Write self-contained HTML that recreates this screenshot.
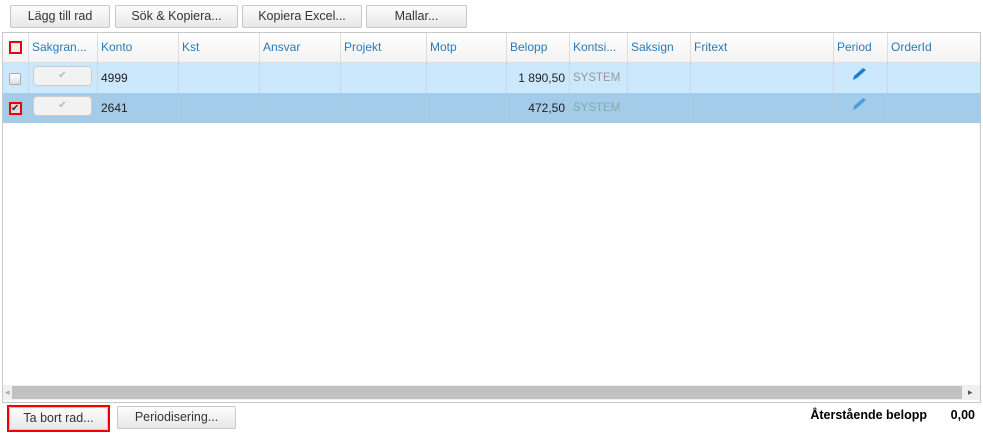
<!DOCTYPE html><html><head><style>
body{margin:0;width:983px;height:438px;background:#fff;font-family:"Liberation Sans",sans-serif;font-size:13px;position:relative;overflow:hidden}
.a{position:absolute}
.btn{position:absolute;box-sizing:border-box;border:1px solid #c8c8c8;border-radius:2px;background:linear-gradient(#fcfcfc,#e8e8e8);color:#333;font-size:12.5px;text-align:center;line-height:21px;height:23px;top:5px}
.h{position:absolute;top:33px;height:30px;line-height:29px;color:#2a7ab8;font-size:12px;padding-left:3px;box-sizing:border-box;border-left:1px solid #ddd;white-space:nowrap;overflow:hidden}
.v{position:absolute;width:0;border-left:1px dotted #c8c8c8;top:63px;height:60px}
.c{position:absolute;font-size:12px;line-height:30px;color:#222}
.cb{position:absolute;width:10px;height:10px;border:1px solid #aaa;border-radius:2px;background:linear-gradient(#fff,#ddd)}
.tg{position:absolute;left:33px;width:57px;height:18px;border:1px solid #ccc;border-radius:4px;background:#f2f2f2;color:#bbb;font-size:10px;text-align:center;line-height:18px}
</style></head><body>
<div class="btn" style="left:10px;width:100px">Lägg till rad</div>
<div class="btn" style="left:115px;width:123px">Sök &amp; Kopiera...</div>
<div class="btn" style="left:242px;width:120px">Kopiera Excel...</div>
<div class="btn" style="left:366px;width:101px">Mallar...</div>
<div class="a" style="left:2px;top:32px;width:977px;height:369px;border:1px solid #c8c8c8"></div>
<div class="a" style="left:3px;top:33px;width:977px;height:30px;background:linear-gradient(#fff,#f2f2f2);border-bottom:1px solid #ddd;box-sizing:border-box"></div>
<div class="a" style="left:3px;top:63px;width:977px;height:30px;background:#cce8fc"></div>
<div class="a" style="left:3px;top:93px;width:977px;height:30px;background:#a3cbea"></div>
<div class="h" style="left:28px;width:69px">Sakgran...</div>
<div class="h" style="left:97px;width:81px">Konto</div>
<div class="h" style="left:178px;width:81px">Kst</div>
<div class="h" style="left:259px;width:81px">Ansvar</div>
<div class="h" style="left:340px;width:86px">Projekt</div>
<div class="h" style="left:426px;width:80px">Motp</div>
<div class="h" style="left:506px;width:63px">Belopp</div>
<div class="h" style="left:569px;width:58px">Kontsi...</div>
<div class="h" style="left:627px;width:63px">Saksign</div>
<div class="h" style="left:690px;width:143px">Fritext</div>
<div class="h" style="left:833px;width:54px">Period</div>
<div class="h" style="left:887px;width:93px">OrderId</div>
<div class="v" style="left:28px"></div><div class="v" style="left:97px"></div><div class="v" style="left:178px"></div><div class="v" style="left:259px"></div><div class="v" style="left:340px"></div><div class="v" style="left:426px"></div><div class="v" style="left:506px"></div><div class="v" style="left:569px"></div><div class="v" style="left:627px"></div><div class="v" style="left:690px"></div><div class="v" style="left:833px"></div><div class="v" style="left:887px"></div>
<div class="a" style="left:9px;top:41px;width:9px;height:9px;border:2px solid #e00;background:#eee"></div>
<div class="cb" style="left:9px;top:73px"></div>
<div class="a" style="left:9px;top:102px;width:9px;height:9px;border:2px solid #e00;background:#ddd;font-size:10px;line-height:10px;color:#333">✔</div>
<div class="tg" style="top:66px">✔</div><div class="tg" style="top:96px">✔</div>
<div class="c" style="left:101px;top:63px">4999</div>
<div class="c" style="left:101px;top:93px">2641</div>
<div class="c" style="left:506px;width:59px;text-align:right;top:63px">1 890,50</div>
<div class="c" style="left:506px;width:59px;text-align:right;top:93px">472,50</div>
<div class="c" style="left:573px;top:63px;color:#999;font-size:11.5px">SYSTEM</div>
<div class="c" style="left:573px;top:93px;color:#8aa;font-size:11.5px">SYSTEM</div>
<svg class="a" style="left:851px;top:66px" width="18" height="16" viewBox="0 0 18 16"><path d="M2 14 L3 10 L12 2 L15 4 L6 12 Z" fill="#1a7fd4"/></svg>
<svg class="a" style="left:851px;top:96px" width="18" height="16" viewBox="0 0 18 16"><path d="M2 14 L3 10 L12 2 L15 4 L6 12 Z" fill="#4a9ee0"/></svg>
<div class="a" style="left:3px;top:385px;width:977px;height:15px;background:#f0f0f0"></div>
<div class="a" style="left:12px;top:386px;width:950px;height:13px;background:#c1c1c1"></div>
<div class="a" style="left:5px;top:385px;color:#aaa;font-size:9px;line-height:15px">◂</div>
<div class="a" style="left:968px;top:385px;color:#555;font-size:9px;line-height:15px">▸</div>
<div class="a" style="left:7px;top:405px;width:103px;height:27px;border:2px solid #e00;box-sizing:border-box"></div>
<div class="btn" style="left:9px;top:407px;width:99px;height:23px">Ta bort rad...</div>
<div class="btn" style="left:117px;top:406px;width:119px;height:23px">Periodisering...</div>
<div class="a" style="left:700px;width:227px;text-align:right;top:408px;font-weight:bold;font-size:12.5px">Återstående belopp</div>
<div class="a" style="left:900px;width:75px;text-align:right;top:408px;font-weight:bold;font-size:12.5px">0,00</div>
</body></html>
